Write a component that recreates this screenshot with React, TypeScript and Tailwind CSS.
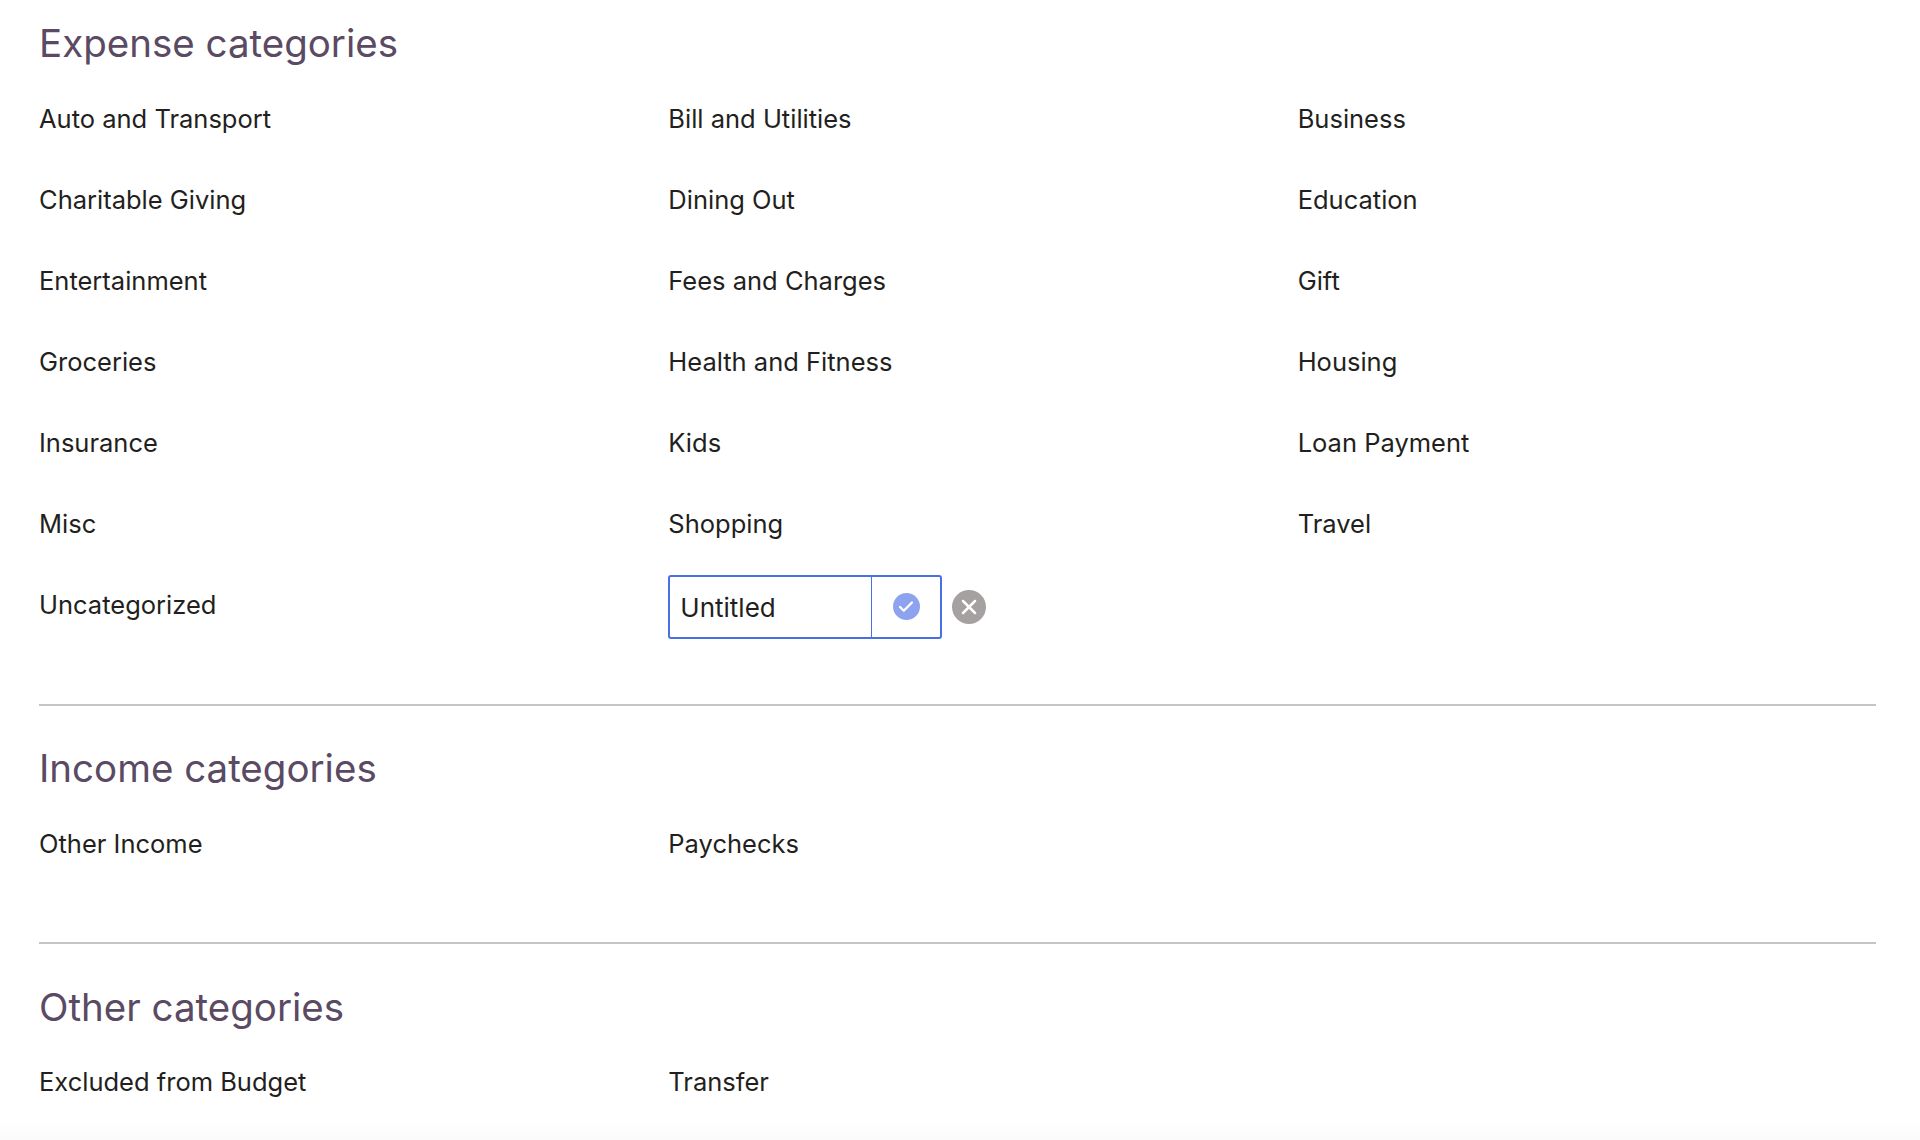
import { Check, X } from 'lucide-react'

const expense = [
  'Auto and Transport', 'Bill and Utilities', 'Business',
  'Charitable Giving', 'Dining Out', 'Education',
  'Entertainment', 'Fees and Charges', 'Gift',
  'Groceries', 'Health and Fitness', 'Housing',
  'Insurance', 'Kids', 'Loan Payment',
  'Misc', 'Shopping', 'Travel',
  'Uncategorized',
]

function Category({ name }: { name: string }) {
  return <div className="h-[81px] flex items-center text-[25.5px] text-[#231f20]">{name}</div>
}

function Heading({ children }: { children: string }) {
  return <h2 className="h-[50px] flex items-center text-[38.5px] text-[#5a4a63]">{children}</h2>
}

export default function App() {
  return (
    <div className="relative h-[1140px] overflow-hidden bg-white pl-[39px] pr-[44px] pt-[19px] font-['Inter',sans-serif]">
      {/* Expense */}
      <section className="pb-[58px] border-b-2 border-[#c4c4c4]">
        <Heading>Expense categories</Heading>
        <div className="grid grid-cols-3 gap-x-[51px] pt-[9.5px]">
          {expense.map((c) => <Category key={c} name={c} />)}
          <div className="h-[81px] flex items-center gap-[10px] pt-[3px]">
            <div className="w-[274px] h-[64px] flex rounded-[3px] border-2 border-[#4a6fe3]">
              <div className="w-[201px] flex items-center pl-[10px] pt-[2px] text-[26px] text-[#231f20]">Untitled</div>
              <div className="flex-1 flex items-center justify-center border-l border-[#4a6fe3]">
                <span className="w-[27px] h-[27px] rounded-full bg-[#8da3ef] flex items-center justify-center">
                  <Check size={18} strokeWidth={3} className="text-white" />
                </span>
              </div>
            </div>
            <span className="w-[34px] h-[34px] rounded-full bg-[#a5a1a1] flex items-center justify-center">
              <X size={24} strokeWidth={2.5} className="text-white" />
            </span>
          </div>
        </div>
      </section>

      {/* Income */}
      <section className="pt-[38.5px] pb-[57px] border-b-2 border-[#c4c4c4]">
        <Heading>Income categories</Heading>
        <div className="grid grid-cols-3 gap-x-[51px] pt-[10px]">
          <Category name="Other Income" />
          <Category name="Paychecks" />
        </div>
      </section>

      {/* Other */}
      <section className="pt-[39px]">
        <Heading>Other categories</Heading>
        <div className="grid grid-cols-3 gap-x-[51px] pt-[9px]">
          <Category name="Excluded from Budget" />
          <Category name="Transfer" />
        </div>
      </section>

      {/* faint fade at the bottom edge */}
      <div className="absolute inset-x-0 bottom-0 h-[20px] bg-gradient-to-b from-white to-[#fbfbfb]" />
    </div>
  )
}
